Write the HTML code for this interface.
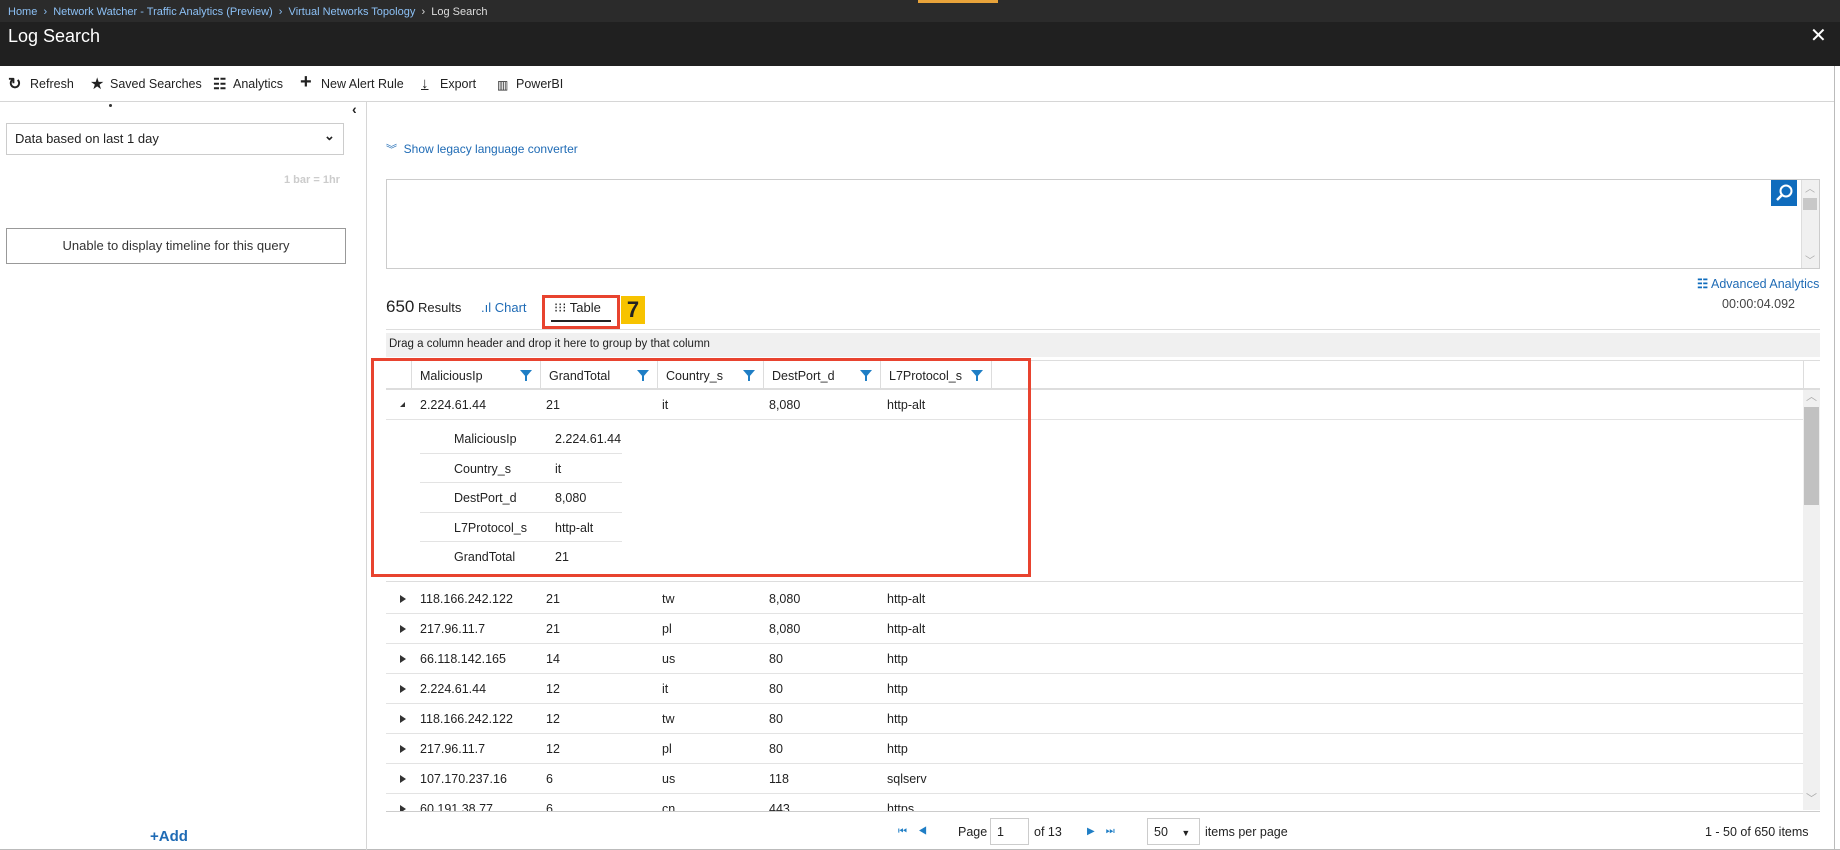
<!DOCTYPE html>
<html><head><meta charset="utf-8"><style>
*{margin:0;padding:0;box-sizing:border-box}
body{width:1840px;height:850px;overflow:hidden;background:#fff;font-family:"Liberation Sans",sans-serif;font-size:12.5px;color:#222;position:relative}
.a{position:absolute;white-space:nowrap}
.blue{color:#1f6bb5}
.tb{position:absolute;top:77px;font-size:12.5px;white-space:nowrap}
.row{position:absolute;left:386px;width:1417px;height:30px;border-bottom:1px solid #e3e3e3}
.row span{position:absolute;top:8px}
.tri{position:absolute;left:14px;top:11px;width:0;height:0;border-left:6px solid #333;border-top:4px solid transparent;border-bottom:4px solid transparent}
.hd{position:absolute;top:0;height:29px;border-left:1px solid #ddd}
.hd span{position:absolute;left:8px;top:8px}
.fl{position:absolute;right:8px;top:9px;width:0;height:0;border-left:6px solid transparent;border-right:6px solid transparent;border-top:7px solid #1f7ec5}
.fl:after{content:"";position:absolute;left:-1px;top:-2px;width:2px;height:6px;background:#1f7ec5}
.dr{position:absolute;left:420px;width:202px;height:29.5px;border-bottom:1px solid #e3e3e3}
.dr span{position:absolute;top:8px}
</style></head><body>
<div class="a" style="left:0;top:0;width:1840px;height:22px;background:#2b2b2b"></div>
<div class="a" style="left:0;top:22px;width:1840px;height:44px;background:#202020"></div>
<div class="a" style="left:918px;top:0;width:80px;height:3px;background:#e8a33a"></div>
<div class="a" style="left:8px;top:6px;font-size:11px;color:#8cc0f5">Home &nbsp;›&nbsp; Network Watcher - Traffic Analytics (Preview) &nbsp;›&nbsp; Virtual Networks Topology &nbsp;<span style="color:#ddd">›&nbsp; Log Search</span></div>
<div class="a" style="left:8px;top:26px;font-size:18px;color:#fff">Log Search</div>
<div class="a" style="left:1810px;top:23px;font-size:20px;color:#fff">✕</div>
<div class="a" style="left:1834px;top:66px;width:1px;height:784px;background:#bbb"></div>
<div class="a" style="left:0;top:849px;width:1840px;height:1px;background:#bbb"></div>
<div class="a" style="left:0;top:101px;width:1834px;height:1px;background:#d6d6d6"></div>
<div class="tb" style="left:8px;top:74px;font-size:16px;font-weight:bold">↻</div><div class="tb" style="left:30px">Refresh</div>
<div class="tb" style="left:90px;top:74px;font-size:16px">★</div><div class="tb" style="left:110px">Saved Searches</div>
<div class="tb" style="left:213px;top:75px;font-size:15px;font-weight:bold">☷</div><div class="tb" style="left:233px">Analytics</div>
<div class="tb" style="left:300px;top:71px;font-size:20px;font-weight:bold">+</div><div class="tb" style="left:321px">New Alert Rule</div>
<div class="tb" style="left:421px;top:75px;font-size:15px;font-weight:bold;text-decoration:underline">↓</div><div class="tb" style="left:440px">Export</div>
<div class="tb" style="left:497px;top:78px;font-size:12px">▥</div><div class="tb" style="left:516px">PowerBI</div>
<div class="a" style="left:366px;top:102px;width:1px;height:748px;background:#d6d6d6"></div>
<div class="a" style="left:109px;top:104px;width:3px;height:3px;background:#333;border-radius:2px"></div>
<div class="a" style="left:352px;top:101px;font-size:14px;font-weight:bold">‹</div>
<div class="a" style="left:6px;top:123px;width:338px;height:32px;border:1px solid #ccc"></div>
<div class="a" style="left:15px;top:131px;font-size:13px">Data based on last 1 day</div>
<div class="a" style="left:324px;top:128px;font-size:13px;font-weight:bold">⌄</div>
<div class="a" style="left:284px;top:174px;font-size:11px;color:#ccc;font-weight:bold">1 bar = 1hr</div>
<div class="a" style="left:6px;top:228px;width:340px;height:36px;border:1px solid #999;text-align:center;line-height:34px;font-size:13px;color:#333">Unable to display timeline for this query</div>
<div class="a blue" style="left:150px;top:828px;font-size:15px;font-weight:bold">+Add</div>
<div class="a blue" style="left:386px;top:141px;font-size:12px"><span style="font-size:11px">︾</span> &nbsp;Show legacy language converter</div>
<div class="a" style="left:386px;top:179px;width:1434px;height:90px;border:1px solid #ccc"></div>
<div class="a" style="left:1801px;top:180px;width:18px;height:88px;background:#f0f0f0;border-left:1px solid #ddd"></div>
<div class="a" style="left:1803px;top:198px;width:14px;height:12px;background:#c8c8c8"></div>
<div class="a" style="left:1805px;top:180px;font-size:10px;color:#aaa">︿</div>
<div class="a" style="left:1805px;top:252px;font-size:10px;color:#aaa">﹀</div>
<div class="a" style="left:1771px;top:180px;width:26px;height:26px;background:#0f6cbd"></div>
<svg class="a" style="left:1774px;top:183px" width="20" height="20" viewBox="0 0 20 20"><circle cx="12" cy="8" r="5.5" fill="none" stroke="#fff" stroke-width="2"/><line x1="8" y1="12" x2="3" y2="17" stroke="#fff" stroke-width="2.5"/></svg>
<div class="a blue" style="left:1697px;top:276px;font-size:12.5px"><span style="color:#0f6cbd;font-weight:bold">☷</span> Advanced Analytics</div>
<div class="a" style="left:1722px;top:297px;font-size:12.5px;color:#444">00:00:04.092</div>
<div class="a" style="left:386px;top:297px;font-size:13px"><span style="font-size:17px">650</span> Results</div>
<div class="a blue" style="left:481px;top:300px;font-size:13px">.ıl Chart</div>
<div class="a" style="left:542px;top:295px;width:78px;height:34px;border:3px solid #e8432f"></div>
<div class="a" style="left:554px;top:300px;font-size:13px">⁝⁝⁝ Table</div>
<div class="a" style="left:551px;top:320px;width:60px;height:2px;background:#222"></div>
<div class="a" style="left:621px;top:296px;width:24px;height:28px;background:#f7c300;font-weight:bold;font-size:22px;text-align:center;line-height:28px">7</div>
<div class="a" style="left:386px;top:329px;width:1434px;height:1px;background:#ddd"></div>
<div class="a" style="left:386px;top:333px;width:1434px;height:24px;background:#f0f0f0"></div>
<div class="a" style="left:389px;top:338px;font-size:11.5px">Drag a column header and drop it here to group by that column</div>
<div class="a" style="left:386px;top:360px;width:1434px;height:30px;border-top:1px solid #ddd;border-bottom:2px solid #ddd">
<div class="hd" style="left:25px;width:129px"><span>MaliciousIp</span><i class="fl"></i></div>
<div class="hd" style="left:154px;width:117px"><span>GrandTotal</span><i class="fl"></i></div>
<div class="hd" style="left:271px;width:106px"><span>Country_s</span><i class="fl"></i></div>
<div class="hd" style="left:377px;width:117px"><span>DestPort_d</span><i class="fl"></i></div>
<div class="hd" style="left:494px;width:112px;border-right:1px solid #ddd"><span>L7Protocol_s</span><i class="fl"></i></div>
<div class="hd" style="left:1417px;width:17px"></div>
</div>
<div class="a" style="left:1803px;top:390px;width:17px;height:420px;background:#f0f0f0"></div>
<div class="a" style="left:1804px;top:407px;width:15px;height:98px;background:#c1c1c1"></div>
<div class="a" style="left:1806px;top:388px;font-size:11px;color:#aaa">︿</div>
<div class="a" style="left:1806px;top:790px;font-size:11px;color:#aaa">﹀</div>
<div class="row" style="top:390px"><i style="position:absolute;left:14px;top:12px;width:0;height:0;border-left:5px solid transparent;border-bottom:5px solid #333"></i><span style="left:34px">2.224.61.44</span><span style="left:160px">21</span><span style="left:276px">it</span><span style="left:383px">8,080</span><span style="left:501px">http-alt</span></div>
<div class="a" style="left:386px;top:420px;width:1417px;height:162px;border-bottom:1px solid #ddd"></div>
<div class="dr" style="top:424px"><span style="left:34px">MaliciousIp</span><span style="left:135px">2.224.61.44</span></div>
<div class="dr" style="top:453.5px"><span style="left:34px">Country_s</span><span style="left:135px">it</span></div>
<div class="dr" style="top:483px"><span style="left:34px">DestPort_d</span><span style="left:135px">8,080</span></div>
<div class="dr" style="top:512.5px"><span style="left:34px">L7Protocol_s</span><span style="left:135px">http-alt</span></div>
<div class="dr" style="top:542px;border-bottom:none"><span style="left:34px">GrandTotal</span><span style="left:135px">21</span></div>
<div class="a" style="left:371px;top:358px;width:660px;height:219px;border:3px solid #e8432f"></div>
<div class="row" style="top:584px"><i class="tri"></i><span style="left:34px">118.166.242.122</span><span style="left:160px">21</span><span style="left:276px">tw</span><span style="left:383px">8,080</span><span style="left:501px">http-alt</span></div>
<div class="row" style="top:614px"><i class="tri"></i><span style="left:34px">217.96.11.7</span><span style="left:160px">21</span><span style="left:276px">pl</span><span style="left:383px">8,080</span><span style="left:501px">http-alt</span></div>
<div class="row" style="top:644px"><i class="tri"></i><span style="left:34px">66.118.142.165</span><span style="left:160px">14</span><span style="left:276px">us</span><span style="left:383px">80</span><span style="left:501px">http</span></div>
<div class="row" style="top:674px"><i class="tri"></i><span style="left:34px">2.224.61.44</span><span style="left:160px">12</span><span style="left:276px">it</span><span style="left:383px">80</span><span style="left:501px">http</span></div>
<div class="row" style="top:704px"><i class="tri"></i><span style="left:34px">118.166.242.122</span><span style="left:160px">12</span><span style="left:276px">tw</span><span style="left:383px">80</span><span style="left:501px">http</span></div>
<div class="row" style="top:734px"><i class="tri"></i><span style="left:34px">217.96.11.7</span><span style="left:160px">12</span><span style="left:276px">pl</span><span style="left:383px">80</span><span style="left:501px">http</span></div>
<div class="row" style="top:764px"><i class="tri"></i><span style="left:34px">107.170.237.16</span><span style="left:160px">6</span><span style="left:276px">us</span><span style="left:383px">118</span><span style="left:501px">sqlserv</span></div>
<div class="a" style="left:386px;top:794px;width:1417px;height:17px;overflow:hidden"><i class="tri"></i><span class="a" style="left:34px;top:8px">60.191.38.77</span><span class="a" style="left:160px;top:8px">6</span><span class="a" style="left:276px;top:8px">cn</span><span class="a" style="left:383px;top:8px">443</span><span class="a" style="left:501px;top:8px">https</span></div>
<div class="a" style="left:386px;top:811px;width:1434px;height:1px;background:#ccc"></div>
<div class="a" style="left:898px;top:826px;font-size:10px;color:#1f7ec5">⏮ &nbsp;&nbsp; ◀</div>
<div class="a" style="left:958px;top:825px;font-size:12.5px">Page</div>
<div class="a" style="left:990px;top:818px;width:39px;height:27px;border:1px solid #ccc;padding:6px 0 0 6px;font-size:12.5px">1</div>
<div class="a" style="left:1034px;top:825px;font-size:12.5px">of 13</div>
<div class="a" style="left:1087px;top:826px;font-size:10px;color:#1f7ec5">▶ &nbsp;&nbsp; ⏭</div>
<div class="a" style="left:1147px;top:818px;width:53px;height:27px;border:1px solid #ccc;padding:6px 0 0 6px;font-size:12.5px">50 <span style="font-size:9px;margin-left:10px">▼</span></div>
<div class="a" style="left:1205px;top:825px;font-size:12.5px">items per page</div>
<div class="a" style="left:1705px;top:825px;font-size:12.5px">1 - 50 of 650 items</div>
</body></html>
